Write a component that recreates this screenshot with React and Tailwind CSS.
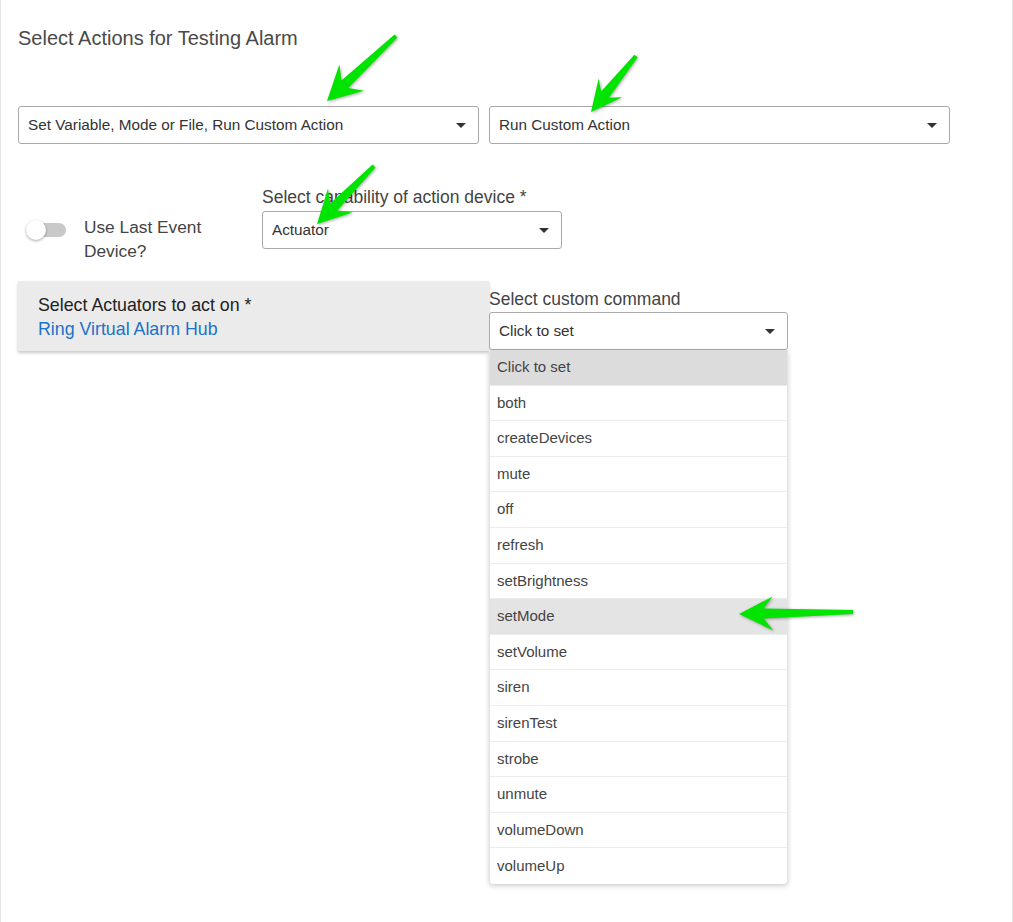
import clsx from 'clsx';

const cn = clsx;

const COMMANDS = [
	'Click to set',
	'both',
	'createDevices',
	'mute',
	'off',
	'refresh',
	'setBrightness',
	'setMode',
	'setVolume',
	'siren',
	'sirenTest',
	'strobe',
	'unmute',
	'volumeDown',
	'volumeUp',
];

// green callout arrows: tail, tip, head length, head half-width
const ARROWS = [
	{ tail: [395, 36], tip: [326, 101], h: 34, w: 18 },
	{ tail: [635, 56], tip: [590, 112], h: 31, w: 15 },
	{ tail: [373, 166], tip: [316, 224], h: 33, w: 17 },
	{ tail: [852, 612], tip: [738, 614], h: 34, w: 17 },
];

function arrowPoints({ tail, tip, h, w }) {
	const dx = tip[0] - tail[0];
	const dy = tip[1] - tail[1];
	const len = Math.hypot(dx, dy);
	const d = [dx / len, dy / len];
	const n = [-d[1], d[0]];
	const at = (p, along, side) => [
		p[0] - d[0] * along + n[0] * side,
		p[1] - d[1] * along + n[1] * side,
	];
	const pts = [
		at(tail, 0, 2),
		at(tip, h * 0.72, 5),
		at(tip, h, w),
		tip,
		at(tip, h, -w),
		at(tip, h * 0.72, -5),
		at(tail, 0, -2),
	];
	return pts.map((p) => p.map((v) => v.toFixed(1)).join(',')).join(' ');
}

function Caret() {
	return (
		<svg width="10" height="5" viewBox="0 0 10 5" className="shrink-0">
			<polygon points="0,0 10,0 5,5" fill="#333" />
		</svg>
	);
}

function Select({ value, className }) {
	return (
		<div
			className={cn(
				'flex items-center justify-between h-[38px] border border-[#a9a9a9] rounded-[3px] bg-white pl-[9px] pr-[12px] text-[15.3px] text-[#333]',
				className,
			)}
		>
			<span>{value}</span>
			<Caret />
		</div>
	);
}

export default function App() {
	return (
		<div className="relative w-[1013px] h-[922px] bg-white border-l border-r border-[#e6e6e6] pl-[17px] font-['Liberation_Sans',Arial,sans-serif] text-[#444]">
			<div className="pt-[26px] text-[20px] leading-[24px] text-[#4a4a4a]">
				Select Actions for Testing Alarm
			</div>

			<div className="flex gap-[10px] mt-[56px]">
				<Select value="Set Variable, Mode or File, Run Custom Action" className="w-[461px]" />
				<Select value="Run Custom Action" className="w-[461px]" />
			</div>

			<div className="flex items-start h-[64px] mt-[41px]">
				<div className="flex items-start w-[244px] pt-[30px]">
					<div className="relative w-[40px] h-[20px] ml-[8px] mt-[5px] shrink-0">
						<div className="absolute left-[10px] top-[3px] w-[30px] h-[14px] rounded-full bg-[#c9c9c9]" />
						<div className="absolute left-0 top-0 w-[20px] h-[20px] rounded-full bg-white shadow-[0_1px_3px_rgba(0,0,0,0.35)]" />
					</div>
					<div className="ml-[18px] w-[140px] text-[17.3px] leading-[24px]">
						Use Last Event Device?
					</div>
				</div>
				<div className="flex flex-col">
					<div className="text-[17.5px] leading-[24px] mb-[2px] whitespace-nowrap">
						Select capability of action device *
					</div>
					<Select value="Actuator" className="w-[300px]" />
				</div>
			</div>

			<div className="flex items-start mt-[32px]">
				<div className="w-[471px] h-[70px] bg-[#ebebeb] pl-[20px] pt-[12px] text-[17.8px] leading-[24px] shadow-[0_2px_3px_rgba(0,0,0,0.22)]">
					<div className="text-[#222]">Select Actuators to act on *</div>
					<div className="text-[#1b72c9]">Ring Virtual Alarm Hub</div>
				</div>
				<div className="flex flex-col pt-[6px]">
					<div className="text-[17.5px] leading-[24px] mb-[1px]">Select custom command</div>
					<Select value="Click to set" className="w-[299px] border-[#84a9dc]" />
					<div className="w-[299px] bg-white rounded-b-[4px] shadow-[0_2px_5px_rgba(0,0,0,0.2)] border-x border-[#e4e4e4]">
						{COMMANDS.map((c, i) => (
							<div
								key={c}
								className={cn(
									'flex items-center h-[35.6px] pl-[7px] text-[15px] text-[#444]',
									i < COMMANDS.length - 1 && 'border-b border-[#ececec]',
									i === 0 && 'bg-[#dcdcdc]',
									c === 'setMode' && 'bg-[#e4e4e4]',
								)}
							>
								{c}
							</div>
						))}
					</div>
				</div>
			</div>

			<svg
				className="absolute left-0 top-0 pointer-events-none"
				width="1013"
				height="922"
				style={{ filter: 'drop-shadow(1px 1px 1.5px rgba(0,0,0,0.35))' }}
			>
				{ARROWS.map((a, i) => (
					<polygon key={i} points={arrowPoints(a)} fill="#00e400" strokeLinejoin="round" />
				))}
			</svg>
		</div>
	);
}
